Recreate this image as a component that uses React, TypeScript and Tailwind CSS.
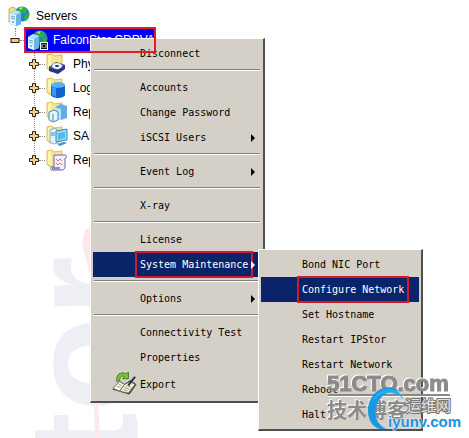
import React from "react";

type Kind = "disk" | "drum" | "servers" | "computer" | "report";

type Entry = { label: string; submenu?: boolean; active?: boolean; icon?: boolean };

const branches: { label: string; kind: Kind }[] = [
  { label: "Physical Resources", kind: "disk" },
  { label: "Logical Resources", kind: "drum" },
  { label: "Replication", kind: "servers" },
  { label: "SAN Clients", kind: "computer" },
  { label: "Reports", kind: "report" },
];

const groups: Entry[][] = [
  [{ label: "Disconnect" }],
  [{ label: "Accounts" }, { label: "Change Password" }, { label: "iSCSI Users", submenu: true }],
  [{ label: "Event Log", submenu: true }],
  [{ label: "X-ray" }],
  [{ label: "License" }, { label: "System Maintenance", submenu: true, active: true }],
  [{ label: "Options", submenu: true }],
  [{ label: "Connectivity Test" }, { label: "Properties" }, { label: "Export", icon: true }],
];

const maintenance: Entry[] = [
  { label: "Bond NIC Port" },
  { label: "Configure Network", active: true },
  { label: "Set Hostname" },
  { label: "Restart IPStor" },
  { label: "Restart Network" },
  { label: "Reboot" },
  { label: "Halt" },
];

function ServerIcon({ badge = false }: { badge?: boolean }) {
  return (
    <svg viewBox="0 0 22 22" className="relative size-[22px] shrink-0" aria-hidden="true">
      {!badge && <path d="M1 4l3-2 3 1v15l-6-1z" fill="#f6df80" stroke="#cfae45" />}
      <circle cx="14" cy="9" r="7.5" fill="#1c86c4" />
      <path d="M10 3c3-2 7-1 9 2l-2 4-3-1-1 4-4-2zM16 11l5-3c1 4-1 7-4 8z" fill="#35ae40" />
      <path d="M11 3l4-1-2 3z" fill="#b6ec8c" />
      <path d="M2 8l5-3 6 2v12l-5 2-6-2z" fill="#4ba4dc" />
      <path d="M2 8l6 2v11l-6-2z" fill="#e2f5ff" />
      <path d="M8 10l5-3v12l-5 2z" fill="#67b5e6" />
      <path d="M2 8l5-3 6 2-5 3z" fill="#b8e2fa" />
      <path d="M3 11l4 1M3 13l4 1" stroke="#60a5cf" />
      <path d="M4 17h2" stroke="#2c79ad" />
      {badge && (
        <g>
          <rect x="14.5" y="13.5" width="7" height="7" fill="#111" stroke="#fff" />
          <path d="M16 15v4M20 15v4M18 15v1M18 18v1" stroke="#b9e6d8" />
        </g>
      )}
    </svg>
  );
}

function BranchIcon({ kind }: { kind: Kind }) {
  return (
    <svg viewBox="0 0 22 22" className="size-[22px] shrink-0" aria-hidden="true">
      <path d="M1 2l5-1 2 2 8-1v14L4 18l-3-3z" fill="#f8e58c" stroke="#dfbf55" />
      <path d="M2 3l3-1v14l-3-2z" fill="#fff5b5" />
      {kind === "disk" && (
        <g>
          <path d="M3 14l7-5 9 3v4l-7 5-9-3z" fill="#28367f" />
          <path d="M3 14l7-5 9 3-7 5z" fill="#5366b2" />
          <ellipse cx="11" cy="13" rx="5" ry="3" fill="#edf2ff" />
          <ellipse cx="11" cy="13" rx="2" ry="1" fill="#202b68" />
        </g>
      )}
      {kind === "drum" && (
        <g>
          <path d="M5 8v10c1 4 13 4 14 0V8z" fill="#1262cf" />
          <path d="M6 10v8l4 2V11z" fill="#3998f4" />
          <ellipse cx="12" cy="8" rx="7" ry="3" fill="#55b2f5" />
        </g>
      )}
      {kind === "servers" && (
        <g>
          <path d="M9 6l6-3 6 2v12l-6 2-6-2z" fill="#61ade4" />
          <path d="M9 6l6 2v11l-6-2z" fill="#b9e3fb" />
          <path d="M3 11l5-2 4 2v8l-5 2-4-2z" fill="#e3f5ff" stroke="#408ab9" />
          <path d="M7 13v7" stroke="#408ab9" />
        </g>
      )}
      {kind === "computer" && (
        <g>
          <path d="M4 5l4-2 4 2v13l-5 1-3-2z" fill="#dff1fc" stroke="#83afcf" />
          <path d="M5 8h4M5 10h4" stroke="#5889ae" />
          <path d="M10 6l11-2v11l-11 2z" fill="#9fd9f5" stroke="#3689c4" />
          <path d="M12 8l7-1v6l-7 2z" fill="#4cbeea" />
          <path d="M11 19l7-2 3 1-7 3z" fill="#4a8fc9" />
        </g>
      )}
      {kind === "report" && (
        <g>
          <path d="M8 6h11c2 0 2 3 0 3v9c0 2-2 3-3 3H6c-2 0-2-3 0-3h2z" fill="#f4ecff" stroke="#6b64ba" />
          <path d="M10 10l2 2 2-2 2 2M10 14l2 2 2-2 2 2" fill="none" stroke="#c78355" />
          <path d="M6 18h8v3H6z" fill="#8f8bd2" />
        </g>
      )}
    </svg>
  );
}

function Expander({ open = false }: { open?: boolean }) {
  return (
    <svg viewBox="0 0 10 10" className="relative size-[10px] shrink-0" aria-hidden="true">
      {open ? (
        <rect x="1" y="3.5" width="8" height="4" fill="#e9c985" stroke="#2a1c06" />
      ) : (
        <path d="M3.5 .5h3v3h3v3h-3v3h-3v-3h-3v-3h3z" fill="#ecd08c" stroke="#33230a" />
      )}
    </svg>
  );
}

function ExportIcon() {
  return (
    <svg viewBox="0 0 26 26" className="absolute bottom-[3px] left-[19px] size-[25px]" aria-hidden="true">
      <path d="M1 19l7-8 5 3 6-4 6 4-7 10z" fill="#35556a" stroke="#263a42" />
      <path d="M1 18l7-7 5 3-5 7z" fill="#fffde5" stroke="#74715c" />
      <path d="M8 21l5-7 6-3 5 3-7 9z" fill="#f1efd5" stroke="#74715c" />
      <path d="M13 17l5 2M15 15l5 2M12 19l4 2M5 16l4 1M7 14l3 1" stroke="#979681" />
      <path d="M5 11V8c0-6 6-7 10-5l2-2v7h-6l2-2c-3-2-5 0-5 4z" fill="#78ca37" stroke="#397d1b" />
      <path d="M24 6l-7 9" stroke="#202e3b" strokeWidth="2" />
    </svg>
  );
}

function MenuItem({ entry, nested = false }: { entry: Entry; nested?: boolean }) {
  const height = entry.icon ? "h-[29px]" : "h-[25px]";
  const indent = nested ? "pl-9" : "pl-[42px]";
  const colour = entry.active ? "bg-[#0a246a] text-white" : "text-black";
  return (
    <button
      type="button"
      role="menuitem"
      className={`relative flex w-full items-center whitespace-nowrap text-left ${height} ${indent} ${colour}`}
    >
      {entry.icon && <ExportIcon />}
      <span className="relative flex h-full items-center px-[5px] pt-px">
        {entry.label}
        {entry.active && <span className="absolute -inset-y-px inset-x-0 border-2 border-[#d5192b]" />}
      </span>
      {entry.submenu && (
        <svg viewBox="0 0 4 8" className="absolute right-[6px] h-2 w-1" aria-hidden="true">
          <path d="M0 0l4 4-4 4z" fill="currentColor" />
        </svg>
      )}
    </button>
  );
}

const menuFrame =
  "absolute border-t border-l border-r-2 border-b-2 border-t-white border-l-white border-r-[#505050] border-b-[#505050] bg-[#d4d0c8] font-['DejaVu_Sans_Mono',monospace] text-[10px] leading-4";

function Backdrop() {
  return (
    <svg className="pointer-events-none absolute top-0 left-0 h-[438px] w-[140px]" viewBox="0 0 140 438" aria-hidden="true">
      <text
        transform="translate(137 256) rotate(-90)"
        textAnchor="end"
        fontFamily="Liberation Sans, sans-serif"
        fontSize="156"
        fontWeight="700"
        fill="#eeeef5"
      >
        stor
      </text>
      <path d="M86 229q-5 8-3 20l7 26v-47zM94 401h4l2 37h-5z" fill="#fde9e9" />
    </svg>
  );
}

function SiteMarks() {
  return (
    <svg className="pointer-events-none absolute top-[364px] left-[322px] z-30 h-[74px] w-[147px]" viewBox="0 0 147 74" aria-label="51CTO.com 技术博客 运维网 iyunv.com">
      <g fontFamily="Liberation Sans, Noto Sans CJK SC, sans-serif" fontWeight="700">
        <text x="5" y="27" fontSize="22" fill="#8b8b8b" stroke="#8b8b8b" strokeWidth="1" className="drop-shadow-[-1px_-1px_0_white]">
          51CTO.com
        </text>
        <path d="M6 30h122v2H6z" fill="#898989" />
        <path d="M6 32h122v1H6z" fill="#fff" />
        <text x="5" y="54" fontSize="20" fill="#8b8b8b" className="drop-shadow-[-1px_-1px_0_white]">
          技术博客
        </text>
        <path d="M77 27C65 17 46 28 46 47c0 12 8 20 18 18-8-4-12-12-10-21 2-11 12-19 23-17z" fill="#1698e2" />
        <path d="M51 37c3-10 14-15 24-10 3 2 5 5 6 8-7-8-20-9-30 2z" fill="#27a9ed" />
        <text x="84" y="47" fontSize="15" fontWeight="400" fill="#e4e4e4" stroke="#777" strokeWidth="2" paintOrder="stroke">
          运维网
        </text>
        <text x="66" y="63" fontSize="15" fill="#2293da" stroke="#e8f5fc" strokeWidth="1" paintOrder="stroke">
          iyunv.com
        </text>
      </g>
    </svg>
  );
}

export default function App() {
  return (
    <main className="relative min-h-screen overflow-hidden bg-white font-['Liberation_Sans',Arial,sans-serif] text-xs text-black">
      <Backdrop />
      <nav aria-label="Servers" className="relative pt-1">
        <span className="absolute top-7 left-[15px] h-2 border-l border-dotted border-[#888]" />
        <span className="absolute top-[52px] left-[34px] h-[108px] border-l border-dotted border-[#888]" />
        <ul>
          <li>
            <button type="button" className="flex h-6 items-center gap-[6px] pl-2">
              <ServerIcon />
              Servers
            </button>
            <ul>
              <li>
                <div className="flex h-6 items-center pl-[10px]">
                  <Expander open />
                  <span className="w-1 border-t border-dotted border-[#888]" />
                  <button
                    type="button"
                    className="relative flex h-[26px] w-[132px] shrink-0 items-center gap-[5px] bg-[#0000f5] pl-[2px] whitespace-nowrap text-white"
                  >
                    <ServerIcon badge />
                    FalconStor CDPVA
                    <span className="absolute inset-0 z-20 border-2 border-[#e31b2b]" />
                  </button>
                </div>
                <ul>
                  {branches.map((branch) => (
                    <li key={branch.label}>
                      <button type="button" className="flex h-6 items-center pl-[29px]">
                        <Expander />
                        <span className="mr-px w-[6px] border-t border-dotted border-[#888]" />
                        <BranchIcon kind={branch.kind} />
                        <span className="ml-[5px]">{branch.label}</span>
                      </button>
                    </li>
                  ))}
                </ul>
              </li>
            </ul>
          </li>
        </ul>
      </nav>

      <div role="menu" aria-label="Server" className={`${menuFrame} top-[38px] left-[90px] z-10 w-[175px] p-[2px]`}>
        {groups.map((group, index) => (
          <React.Fragment key={group[0].label}>
            {index > 0 && (
              <div role="separator" className="px-px pt-[3px] pb-1">
                <div className="h-[2px] border-t border-b border-t-[#808080] border-b-white" />
              </div>
            )}
            {group.map((entry) => (
              <MenuItem key={entry.label} entry={entry} />
            ))}
          </React.Fragment>
        ))}
      </div>

      <div role="menu" aria-label="System Maintenance" className={`${menuFrame} top-[249px] left-[258px] z-20 w-[165px] p-[2px]`}>
        {maintenance.map((entry) => (
          <MenuItem key={entry.label} entry={entry} nested />
        ))}
      </div>
      <SiteMarks />
    </main>
  );
}
